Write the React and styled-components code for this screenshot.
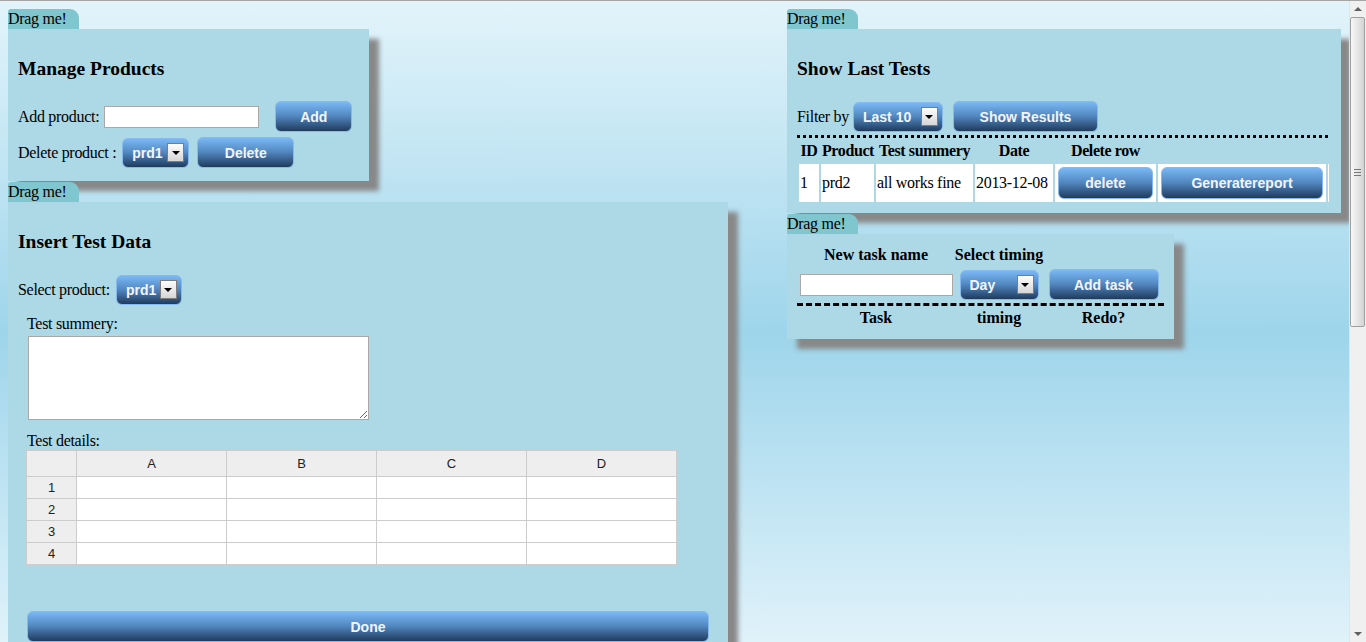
import React from "react";
import styled, { createGlobalStyle } from "styled-components";

const GlobalStyle = createGlobalStyle`
  html {
    border-top: 1px solid #a5a5a5;
    background: linear-gradient(to bottom, #e3f4fb 0%, #9ed5eb 52%, #e0f2fa 100%) fixed;
    scrollbar-width: none;
  }
  body {
    margin: 8px;
    font-family: "Liberation Serif", "Times New Roman", serif;
    font-size: 16px;
    letter-spacing: -0.3px;
    color: #000;
  }
`;

const blueGradient = `linear-gradient(to bottom, #7ab8f5 0%, #5288c0 48%, #1f3b5d 100%)`;

const Desk = styled.main`
  display: flex;
  align-items: flex-start;
  gap: 59px;
  min-height: 1250px;
`;

const Column = styled.div`
  display: flex;
  flex-direction: column;
  align-items: flex-start;
  gap: 1px;
  width: ${(p) => p.$w}px;
`;

const Window = styled.section`
  display: flex;
  flex-direction: column;
  align-items: flex-start;
  width: ${(p) => p.$w}px;
`;

const Handle = styled.div`
  height: 20px;
  line-height: 20px;
  padding-right: 13px;
  background: #7fc6cf;
  border-radius: 3px 9px 0 0;
  cursor: move;
`;

const Panel = styled.div`
  box-sizing: border-box;
  align-self: stretch;
  background: #add8e6;
  box-shadow: 10px 10px 5px #888888;
  padding: 10px 10px ${(p) => p.$pb ?? 12}px;
`;

const Title = styled.h3`
  margin: 19px 0 21px;
  font-size: 19.5px;
  line-height: 22px;
  letter-spacing: 0;
  font-weight: bold;
`;

const FormRow = styled.div`
  display: flex;
  align-items: center;
  height: 31px;
  margin-top: ${(p) => p.$mt || 0}px;
`;

const Button = styled.button`
  box-sizing: border-box;
  display: ${(p) => (p.$block ? "block" : "inline-block")};
  width: ${(p) => (p.$block ? "calc(100% - 4px)" : p.$w ? `${p.$w}px` : "100%")};
  height: ${(p) => p.$h || 31}px;
  margin: ${(p) => (p.$block ? "0 auto" : `0 0 0 ${p.$ml || 0}px`)};
  padding: 0 10px;
  border: 1px solid #86b9ee;
  border-radius: 6px;
  background: ${blueGradient};
  color: #f2f5ff;
  font-family: "Liberation Sans", Arial, sans-serif;
  font-size: 14px;
  letter-spacing: 0;
  font-weight: bold;
  cursor: pointer;
`;

const Select = styled.div`
  box-sizing: border-box;
  display: inline-flex;
  align-items: center;
  justify-content: space-between;
  width: ${(p) => p.$w}px;
  height: 30px;
  margin-left: ${(p) => p.$ml || 0}px;
  padding: 0 4px 0 9px;
  border: 1px solid #86b9ee;
  border-radius: 6px;
  background: ${blueGradient};
  color: #f2f5ff;
  font-family: "Liberation Sans", Arial, sans-serif;
  font-size: 14px;
  letter-spacing: 0;
  font-weight: bold;
`;

const Caret = styled.span`
  box-sizing: border-box;
  display: flex;
  align-items: center;
  justify-content: center;
  width: 17px;
  height: 19px;
  border: 1px solid #7d7d7d;
  background: linear-gradient(to bottom, #fdfdfd, #d6d6d6);

  &::after {
    content: "";
    border-left: 4px solid transparent;
    border-right: 4px solid transparent;
    border-top: 4px solid #000;
  }
`;

const TextInput = styled.input`
  box-sizing: border-box;
  width: ${(p) => p.$w}px;
  height: 22px;
  margin: 0 0 0 ${(p) => p.$ml || 0}px;
  padding: 1px 3px;
  border: 1px solid #a9a9a9;
  background: #fff;
`;

const Dotted = styled.div`
  height: 3px;
  margin-top: 3px;
  background: repeating-linear-gradient(to right, #000 0 3px, transparent 3px 6px);
`;

const Results = styled.table`
  width: 100%;
  table-layout: fixed;
  border-spacing: 2px;
`;

const Col = styled.col`
  width: ${(p) => p.$w}px;
`;

const Th = styled.th`
  padding: 1px;
  line-height: 20px;
  font-weight: bold;
  letter-spacing: -0.4px;
  white-space: nowrap;
`;

const BodyRow = styled.tr`
  height: 38px;
`;

const Td = styled.td`
  padding: 1px;
  background: #fff;
  white-space: nowrap;
`;

const TaskGrid = styled.div`
  display: grid;
  grid-template-columns: 158px 88px 1fr;
  grid-template-rows: 22px 33px 3px 20px;
  row-gap: 2px;
  justify-items: center;
  align-items: center;
`;

const ColHead = styled.div`
  font-weight: bold;
  line-height: 20px;
  letter-spacing: 0;
  white-space: nowrap;
`;

const Dashes = styled.div`
  grid-column: 1 / -1;
  justify-self: stretch;
  align-self: stretch;
  border-top: 3px dashed #000;
`;

const Section = styled.div`
  padding: 0 9px;
`;

const Caption = styled.div`
  line-height: 18px;
  margin-top: ${(p) => p.$mt || 0}px;
`;

const Summary = styled.textarea`
  display: block;
  box-sizing: border-box;
  width: 341px;
  height: 84px;
  margin: 3px 0 0 1px;
  border: 1px solid #a9a9a9;
  background: #fff;
`;

const Sheet = styled.table`
  width: 651px;
  margin: 0 0 0 -1px;
  table-layout: fixed;
  border-collapse: collapse;
  font-family: "Liberation Sans", Arial, sans-serif;
  font-size: 13px;
  letter-spacing: 0;
  color: #222;
`;

const SheetHead = styled.th`
  height: 25px;
  padding: 0;
  border: 1px solid #ccc;
  background: #eeeeee;
  font-weight: normal;
  text-align: center;
`;

const SheetRowHead = styled.th`
  height: 21px;
  padding: 0;
  border: 1px solid #ccc;
  background: #eeeeee;
  font-weight: normal;
`;

const SheetCell = styled.td`
  height: 21px;
  padding: 0;
  border: 1px solid #ccc;
  background: #fff;
`;

const DoneBar = styled.div`
  margin-top: 46px;
`;

/* window scrollbar drawn over the right edge, as in the screenshot */
const Scrollbar = styled.div`
  position: fixed;
  top: 1px;
  right: 0;
  bottom: 0;
  width: 17px;
  box-sizing: border-box;
  display: flex;
  flex-direction: column;
  background: #f0f0f0;
  border-left: 1px solid #e4e4e4;
`;

const ScrollArrow = styled.div`
  flex: none;
  height: 16px;
  display: flex;
  align-items: center;
  justify-content: center;

  &::after {
    content: "";
    border-left: 4px solid transparent;
    border-right: 4px solid transparent;
    ${(p) => (p.$down ? "border-top: 4px solid #606060;" : "border-bottom: 4px solid #606060;")}
  }
`;

const Thumb = styled.div`
  flex: none;
  height: 308px;
  margin: 0 1px 0 0;
  border: 1px solid #a0a0a0;
  border-radius: 2px;
  background: linear-gradient(to right, #f7f7f7, #e6e6e6 50%, #d3d3d3);
  display: flex;
  align-items: center;
  justify-content: center;
`;

const Grip = styled.span`
  width: 7px;
  height: 7px;
  background: repeating-linear-gradient(to bottom, #777 0 1px, transparent 1px 3px);
`;

const Track = styled.div`
  flex: 1;
`;

function Drop({ value, w, ml }) {
  return (
    <Select $w={w} $ml={ml}>
      <span>{value}</span>
      <Caret />
    </Select>
  );
}

export default function App() {
  return (
    <>
      <GlobalStyle />
      <Desk>
        <Column $w={720}>
          <Window $w={361}>
            <Handle>Drag me!</Handle>
            <Panel $pb={13}>
              <Title>Manage Products</Title>
              <FormRow>
                Add product:
                <TextInput $w={155} $ml={5} />
                <Button $w={77} $ml={16}>Add</Button>
              </FormRow>
              <FormRow $mt={5}>
                Delete product :
                <Drop value="prd1" w={67} ml={6} />
                <Button $w={97} $ml={8}>Delete</Button>
              </FormRow>
            </Panel>
          </Window>

          <Window $w={720}>
            <Handle>Drag me!</Handle>
            <Panel $pb={40}>
              <Title>Insert Test Data</Title>
              <FormRow>
                Select product:
                <Drop value="prd1" w={66} ml={6} />
              </FormRow>
              <Section>
                <Caption $mt={10}>Test summery:</Caption>
                <Summary />
                <Caption $mt={12}>Test details:</Caption>
                <Sheet>
                  <colgroup>
                    <Col $w={50} />
                    <Col $w={150} />
                    <Col $w={150} />
                    <Col $w={150} />
                    <Col $w={150} />
                  </colgroup>
                  <thead>
                    <tr>
                      <SheetHead />
                      {["A", "B", "C", "D"].map((c) => (
                        <SheetHead key={c}>{c}</SheetHead>
                      ))}
                    </tr>
                  </thead>
                  <tbody>
                    {[1, 2, 3, 4].map((n) => (
                      <tr key={n}>
                        <SheetRowHead>{n}</SheetRowHead>
                        <SheetCell />
                        <SheetCell />
                        <SheetCell />
                        <SheetCell />
                      </tr>
                    ))}
                  </tbody>
                </Sheet>
                <DoneBar>
                  <Button>Done</Button>
                </DoneBar>
              </Section>
            </Panel>
          </Window>
        </Column>

        <Column $w={554}>
          <Window $w={554}>
            <Handle>Drag me!</Handle>
            <Panel $pb={9}>
              <Title>Show Last Tests</Title>
              <FormRow>
                Filter by
                <Drop value="Last 10" w={90} ml={4} />
                <Button $w={145} $ml={10}>Show Results</Button>
              </FormRow>
              <Dotted />
              <Results>
                <colgroup>
                  <Col $w={20} />
                  <Col $w={53} />
                  <Col $w={97} />
                  <Col $w={78} />
                  <Col $w={101} />
                  <Col $w={168} />
                  <col />
                </colgroup>
                <thead>
                  <tr>
                    <Th>ID</Th>
                    <Th>Product</Th>
                    <Th>Test summery</Th>
                    <Th>Date</Th>
                    <Th>Delete row</Th>
                    <Th />
                    <Th />
                  </tr>
                </thead>
                <tbody>
                  <BodyRow>
                    <Td>1</Td>
                    <Td>prd2</Td>
                    <Td>all works fine</Td>
                    <Td>2013-12-08</Td>
                    <Td>
                      <Button $block $h={32}>delete</Button>
                    </Td>
                    <Td>
                      <Button $block $h={32}>Generatereport</Button>
                    </Td>
                    <Td />
                  </BodyRow>
                </tbody>
              </Results>
            </Panel>
          </Window>

          <Window $w={387}>
            <Handle>Drag me!</Handle>
            <Panel $pb={11}>
              <TaskGrid>
                <ColHead>New task name</ColHead>
                <ColHead>Select timing</ColHead>
                <span />
                <TextInput $w={153} />
                <Drop value="Day" w={79} />
                <Button $w={110}>Add task</Button>
                <Dashes />
                <ColHead>Task</ColHead>
                <ColHead>timing</ColHead>
                <ColHead>Redo?</ColHead>
              </TaskGrid>
            </Panel>
          </Window>
        </Column>
      </Desk>

      <Scrollbar>
        <ScrollArrow />
        <Thumb>
          <Grip />
        </Thumb>
        <Track />
        <ScrollArrow $down />
      </Scrollbar>
    </>
  );
}
